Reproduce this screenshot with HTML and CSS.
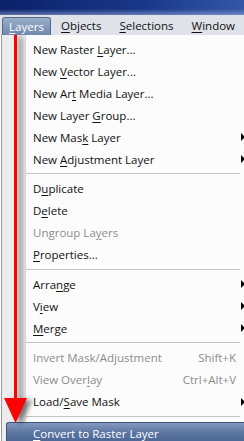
FILE: index.html
```html
<!DOCTYPE html>
<html lang="en">
<head>
    <meta charset="UTF-8">
    <meta name="viewport" content="width=device-width, initial-scale=1.0">
    <title>Layers menu</title>
    <link rel="stylesheet" href="styles.css">
</head>
<body>
    <div class="titlebar"></div>

    <div class="menubar">
        <span class="bar-item open"><u>L</u>ayers</span>
        <span class="bar-item"><u>O</u>bjects</span>
        <span class="bar-item"><u>S</u>elections</span>
        <span class="bar-item"><u>W</u>indow</span>
    </div>

    <div class="menu">
        <div class="item"><span>New Raster <u>L</u>ayer...</span></div>
        <div class="item"><span>New <u>V</u>ector Layer...</span></div>
        <div class="item"><span>New Ar<u>t</u> Media Layer...</span></div>
        <div class="item"><span>New Layer <u>G</u>roup...</span></div>
        <div class="item sub"><span>New Mas<u>k</u> Layer</span></div>
        <div class="item sub"><span>New <u>A</u>djustment Layer</span></div>
        <div class="sep"></div>
        <div class="item"><span>D<u>u</u>plicate</span></div>
        <div class="item"><span>D<u>e</u>lete</span></div>
        <div class="item disabled"><span>Ungroup La<u>y</u>ers</span></div>
        <div class="item"><span><u>P</u>roperties...</span></div>
        <div class="sep"></div>
        <div class="item sub"><span>Arra<u>n</u>ge</span></div>
        <div class="item sub"><span>V<u>i</u>ew</span></div>
        <div class="item sub"><span><u>M</u>erge</span></div>
        <div class="sep"></div>
        <div class="item disabled"><span>Invert Mask/Adjustment</span><span class="key">Shift+K</span></div>
        <div class="item disabled"><span>View Over<u>l</u>ay</span><span class="key">Ctrl+Alt+V</span></div>
        <div class="item sub"><span>Load/<u>S</u>ave Mask</span></div>
        <div class="sep"></div>
        <div class="item hover"><span class="hl"><span><u>C</u>onvert to Raster Layer</span></span></div>

        <svg class="arrow" width="34" height="406" viewBox="0 0 34 406">
            <rect x="13" y="0" width="3" height="366" fill="#ff0000"/>
            <polygon points="3,363 26,363 14.5,388" fill="#ff0000"/>
        </svg>
    </div>
</body>
</html>
```

FILE: styles.css
```css
body {
    margin: 0;
    width: 244px;
    height: 441px;
    overflow: hidden;
    background: #fff;
    font-family: "Open Sans", "Liberation Sans", sans-serif;
    font-size: 11.5px;
    color: #111;
}
u {
    text-decoration: underline;
    text-underline-offset: 2px;
}
.titlebar {
    height: 15px;
    background:
        linear-gradient(to bottom, rgba(255,255,255,0) 60%, rgba(150,170,210,0.6) 100%),
        linear-gradient(to right, #0b216a, #1a3889 60%, #3458a6);
}
.menubar {
    height: 20px;
    background: #dfe2e8;
    display: flex;
    align-items: flex-end;
    padding-left: 2px;
    white-space: nowrap;
}
.bar-item {
    height: 18px;
    line-height: 18px;
    margin-left: 18px;
}
.bar-item.open + .bar-item {
    margin-left: 10px;
}
.bar-item.open {
    width: 49px;
    margin-left: 0;
    text-align: center;
    box-sizing: border-box;
    color: #fff;
    border: 1px solid #56688a;
    border-bottom: none;
    border-radius: 3px 3px 0 0;
    background: linear-gradient(to bottom, #9aaecb, #7088ad);
}
.menu {
    position: relative;
    padding-top: 3px;
    border-left: 1px solid #9a9a9a;
    margin-left: 1px;
    background: linear-gradient(to right, #ececec 0, #ececec 23px, #e0e0e0 23px, #e0e0e0 24px, #fcfcfc 24px);
}
.item {
    height: 22px;
    display: flex;
    align-items: center;
    padding-left: 31px;
    padding-right: 8px;
    position: relative;
    white-space: nowrap;
}
.item.disabled {
    color: #8c8c8c;
}
.key {
    margin-left: auto;
}
.item.sub::after {
    content: "";
    position: absolute;
    right: -1px;
    top: 7px;
    border-left: 4px solid #000;
    border-top: 4px solid transparent;
    border-bottom: 4px solid transparent;
}
.sep {
    height: 7.5px;
    display: flex;
    align-items: center;
    padding-left: 24px;
}
.sep::before {
    content: "";
    flex: 1;
    height: 1px;
    margin-right: 4px;
    background: #c4c4c4;
    box-shadow: 0 1px 0 #fff;
}
.item.hover {
    padding: 2px 0 0 4px;
    align-items: stretch;
}
.hl {
    flex: 1;
    display: flex;
    align-items: center;
    padding-left: 26px;
    color: #fff;
    border: 1px solid #3f5578;
    border-right: none;
    border-radius: 3px 0 0 0;
    background: linear-gradient(to bottom, #8499c0, #5a74a0 50%, #4a6592);
}
.arrow {
    position: absolute;
    left: -1px;
    top: 0;
    filter: drop-shadow(5px 2px 2.5px rgba(0,0,0,0.5));
}
```
